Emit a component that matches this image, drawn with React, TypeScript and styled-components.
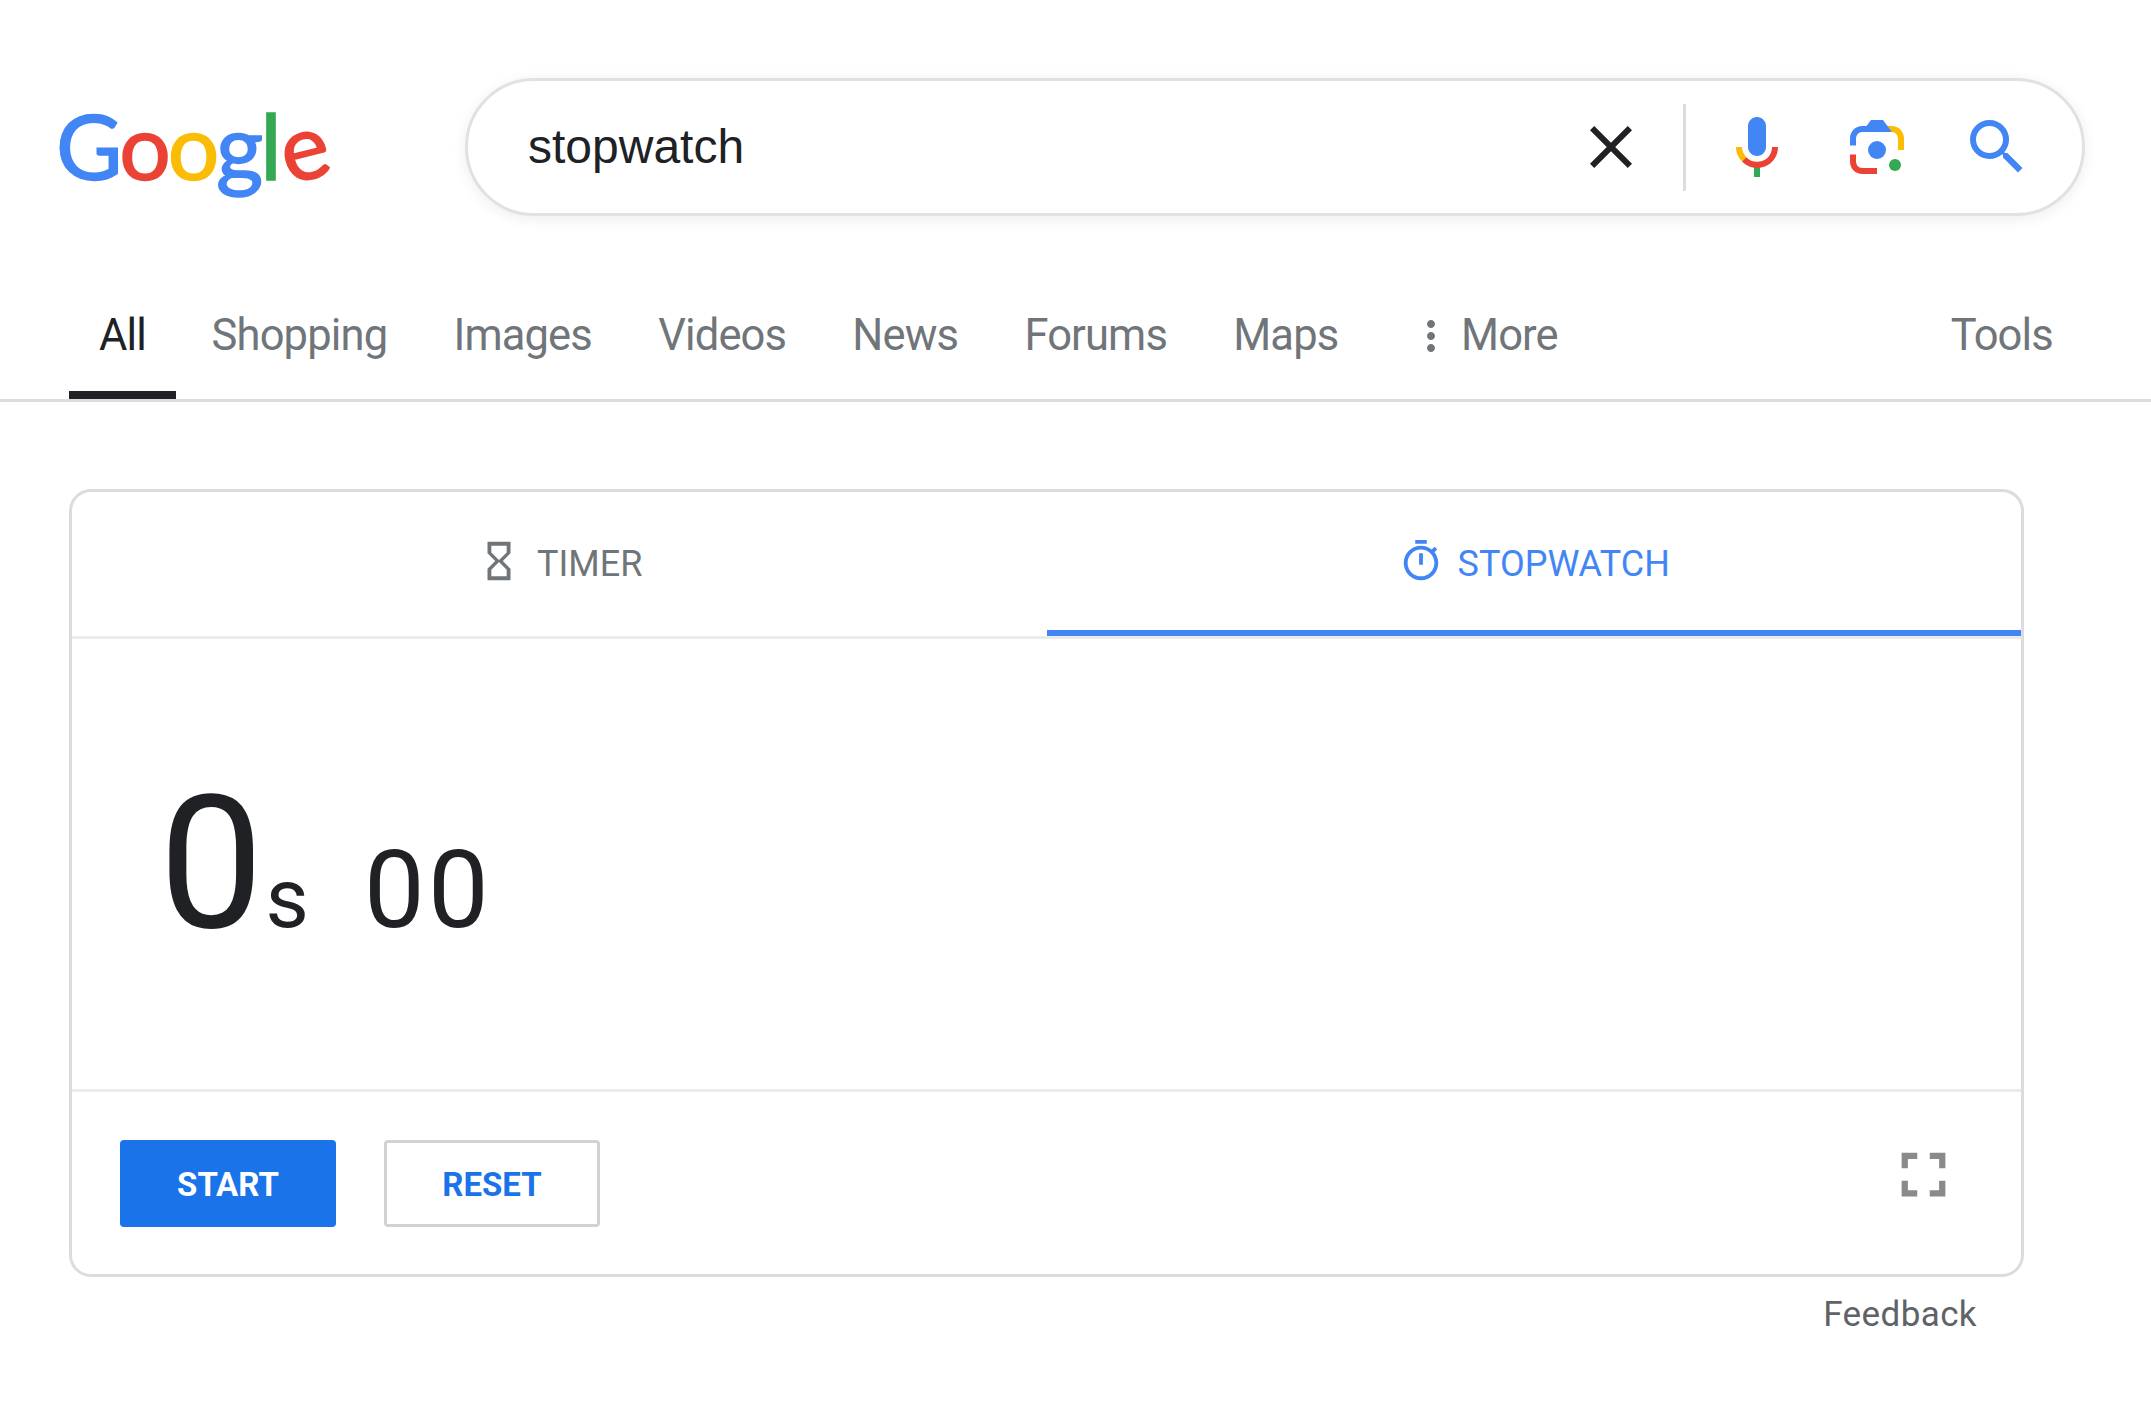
import React from 'react';
import styled, { createGlobalStyle } from 'styled-components';

const GlobalStyle = createGlobalStyle`
  html, body {
    margin: 0;
    padding: 0;
    background: #fff;
  }
  body {
    font-family: Roboto, "Liberation Sans", sans-serif;
    color: #202124;
  }
  * {
    box-sizing: border-box;
  }
`;

const Page = styled.div`
  width: 2151px;
  height: 1401px;
  overflow: hidden;
  background: #fff;
`;

const Header = styled.header`
  display: flex;
  align-items: flex-start;
  padding: 78px 66px 0 56px;
  height: 286px;
`;

const Logo = styled.div`
  width: 409px;
  flex-shrink: 0;
  margin-top: 7px;
  display: flex;
  font-family: Lato, Roboto, sans-serif;
  font-size: 91px;
  line-height: 120px;
  letter-spacing: -3.2px;
  font-weight: 400;
  -webkit-text-stroke: 1.5px currentColor;
`;

const LogoLetter = styled.span<{ $color: string; $tilt?: boolean }>`
  color: ${p => p.$color};
  display: inline-block;
  transform: ${p => (p.$tilt ? 'rotate(-14deg)' : 'none')};
`;

const SearchBox = styled.div`
  flex: 1;
  height: 138px;
  display: flex;
  align-items: center;
  padding: 0 25px 0 60px;
  background: #fff;
  border: 3px solid #dfe1e5;
  border-radius: 69px;
  box-shadow: 0 3px 14px rgba(32, 33, 36, 0.08);
`;

const SearchText = styled.div`
  flex: 1;
  margin-top: -2px;
  font-family: "Liberation Sans", Arial, sans-serif;
  font-size: 48px;
  color: #202124;
`;

const IconSlot = styled.div<{ $width: number }>`
  width: ${p => p.$width}px;
  height: 72px;
  display: flex;
  align-items: center;
  justify-content: center;
  flex-shrink: 0;
`;

const SearchDivider = styled.div`
  width: 3px;
  height: 87px;
  margin: 0 11.5px 0 35.5px;
  background: #dadce0;
`;

const Nav = styled.nav`
  height: 116px;
  display: flex;
  padding: 0 65px 0 69px;
  border-bottom: 3px solid #dadce0;
`;

const NavItem = styled.a<{ $active?: boolean; $offset?: number }>`
  display: flex;
  align-items: flex-start;
  gap: 6px;
  padding: 20px ${p => (p.$active ? '30px' : '33.1px')} 0;
  margin-left: ${p => p.$offset ?? 0}px;
  margin-right: ${p => (p.$active ? '2.5px' : '0')};
  height: 113px;
  font-size: 43.5px;
  letter-spacing: -0.85px;
  line-height: 60px;
  color: ${p => (p.$active ? '#202124' : '#70757a')};
  border-bottom: ${p => (p.$active ? '8px solid #202124' : 'none')};
`;

const NavSpacer = styled.div`
  flex: 1;
`;

const MoreIcon = styled.svg`
  width: 48px;
  height: 48px;
  margin: 6px 0 0 -12px;
  fill: #70757a;
`;

const Main = styled.main`
  padding: 87px 0 0 69px;
`;

const Card = styled.section`
  width: 1955px;
  height: 788px;
  border: 3px solid #dadce0;
  border-radius: 22px;
  display: flex;
  flex-direction: column;
`;

const TabRow = styled.div`
  height: 147px;
  display: grid;
  grid-template-columns: 1fr 1fr;
  border-bottom: 3px solid #ebebeb;
`;

const Tab = styled.div<{ $active?: boolean }>`
  display: flex;
  align-items: center;
  justify-content: center;
  gap: ${p => (p.$active ? '14px' : '15px')};
  height: 144px;
  font-size: 36px;
  color: ${p => (p.$active ? '#4285f4' : '#70757a')};
  border-bottom: 6px solid ${p => (p.$active ? '#4285f4' : 'transparent')};
  svg {
    fill: currentColor;
    flex-shrink: 0;
  }
`;

const TabLabel = styled.span`
  padding-top: 5px;
`;

const Display = styled.div`
  height: 453px;
  display: flex;
  align-items: baseline;
  padding: 124px 0 0 87px;
  color: #202124;
  border-bottom: 3px solid #ebebeb;
`;

const Seconds = styled.span`
  font-size: 186px;
  line-height: 200px;
`;

const Unit = styled.span`
  font-size: 84px;
  margin-left: 2px;
`;

const Fraction = styled.span`
  font-size: 108px;
  letter-spacing: 3.5px;
  margin-left: 55px;
`;

const Controls = styled.div`
  flex: 1;
  display: flex;
  align-items: flex-start;
  gap: 48px;
  padding: 48px 60px 0 48px;
`;

const Button = styled.button<{ $primary?: boolean }>`
  width: 216px;
  height: 87px;
  border-radius: 4px;
  border: ${p => (p.$primary ? 'none' : '3px solid #d2d2d2')};
  background: ${p => (p.$primary ? '#1a73e8' : '#fff')};
  color: ${p => (p.$primary ? '#fff' : '#1a73e8')};
  font-family: Roboto, sans-serif;
  font-size: 33px;
  font-weight: 700;
  padding: 2px 0 0;
`;

const ExpandIcon = styled.svg`
  width: 75px;
  height: 75px;
  margin: -3px 0 0 auto;
  fill: #8a8a8a;
`;

const FeedbackRow = styled.div`
  width: 1955px;
  display: flex;
  justify-content: flex-end;
  padding: 15px 47px 0 0;
`;

const Feedback = styled.a`
  font-size: 35px;
  line-height: 46px;
  letter-spacing: 0.4px;
  color: #5f6368;
`;

const CloseIcon = () => (
  <svg width="72" height="72" viewBox="0 0 24 24" fill="#202124">
    <path d="M19 6.41 17.59 5 12 10.59 6.41 5 5 6.41 10.59 12 5 17.59 6.41 19 12 13.41 17.59 19 19 17.59 13.41 12z" />
  </svg>
);

const MicIcon = () => (
  <svg width="72" height="72" viewBox="0 0 24 24">
    <path fill="#4285f4" d="m12 15c1.66 0 3-1.31 3-2.97v-7.02c0-1.66-1.34-3.01-3-3.01s-3 1.34-3 3.01v7.02c0 1.66 1.34 2.97 3 2.97z" />
    <path fill="#34a853" d="m11 18.08h2v3.92h-2z" />
    <path fill="#fbbc04" d="m7.05 16.87c-1.27-1.33-2.05-2.83-2.05-4.87h2c0 1.45 0.56 2.42 1.47 3.38v0.32l-1.15 1.18z" />
    <path fill="#ea4335" d="m12 16.93a4.97 5.25 0 0 1 -3.54 -1.55l-1.41 1.49c1.26 1.34 3.02 2.13 4.95 2.13 3.87 0 6.99-2.92 6.99-7h-1.99c0 2.92-2.24 4.93-5 4.93z" />
  </svg>
);

const LensIcon = () => (
  <svg width="72" height="72" viewBox="0 0 192 192">
    <circle fill="#34a853" cx="144.07" cy="144" r="16" />
    <circle fill="#4285f4" cx="96.07" cy="104" r="24" />
    <path fill="#ea4335" d="M24,135.2c0,18.11,14.69,32.8,32.8,32.8H96v-16l-40.1-0.1c-8.8,0-15.9-8.19-15.9-17.9v-18H24V135.2z" />
    <path fill="#fbbc04" d="M168,72.8c0-18.11-14.69-32.8-32.8-32.8H116l20,16c8.8,0,16,8.29,16,18v30h16V72.8z" />
    <path fill="#4285f4" d="M112,24l-32,0L68,40H56.8C38.69,40,24,54.69,24,72.8V92h16V74c0-9.71,7.2-18,16-18h80L112,24z" />
  </svg>
);

const SearchIcon = () => (
  <svg width="72" height="72" viewBox="0 0 24 24" fill="#4285f4">
    <path d="M15.5 14h-.79l-.28-.27A6.471 6.471 0 0 0 16 9.5 6.5 6.5 0 1 0 9.5 16c1.61 0 3.09-.59 4.23-1.57l.27.28v.79l5 4.99L20.49 19l-4.99-5zm-6 0C7.01 14 5 11.99 5 9.5S7.01 5 9.5 5 14 7.01 14 9.5 11.99 14 9.5 14z" />
  </svg>
);

const navItems = ['Shopping', 'Images', 'Videos', 'News', 'Forums', 'Maps'];

const App: React.FC = () => {
  return (
    <Page>
      <GlobalStyle />
      <Header>
        <Logo>
          <LogoLetter $color="#4285f4">G</LogoLetter>
          <LogoLetter $color="#ea4335">o</LogoLetter>
          <LogoLetter $color="#fbbc05">o</LogoLetter>
          <LogoLetter $color="#4285f4">g</LogoLetter>
          <LogoLetter $color="#34a853">l</LogoLetter>
          <LogoLetter $color="#ea4335" $tilt>e</LogoLetter>
        </Logo>
        <SearchBox>
          <SearchText>stopwatch</SearchText>
          <IconSlot $width={72}><CloseIcon /></IconSlot>
          <SearchDivider />
          <IconSlot $width={120}><MicIcon /></IconSlot>
          <IconSlot $width={120}><LensIcon /></IconSlot>
          <IconSlot $width={120}><SearchIcon /></IconSlot>
        </SearchBox>
      </Header>

      <Nav>
        <NavItem $active>All</NavItem>
        {navItems.map(item => (
          <NavItem key={item}>{item}</NavItem>
        ))}
        <NavItem $offset={14.5}>
          <MoreIcon viewBox="0 0 24 24">
            <path d="M12 8c1.1 0 2-.9 2-2s-.9-2-2-2-2 .9-2 2 .9 2 2 2zm0 2c-1.1 0-2 .9-2 2s.9 2 2 2 2-.9 2-2-.9-2-2-2zm0 6c-1.1 0-2 .9-2 2s.9 2 2 2 2-.9 2-2-.9-2-2-2z" />
          </MoreIcon>
          More
        </NavItem>
        <NavSpacer />
        <NavItem>Tools</NavItem>
      </Nav>

      <Main>
        <Card>
          <TabRow>
            <Tab>
              <svg width="46" height="46" viewBox="0 0 24 24">
                <path d="M6 2v6h.01L6 8.01 10 12l-4 4 .01.01H6V22h12v-5.99h-.01L18 16l-4-4 4-3.99-.01-.01H18V2H6zm10 14.5V20H8v-3.5l4-4 4 4zm-4-5l-4-4V4h8v3.5l-4 4z" />
              </svg>
              <TabLabel>TIMER</TabLabel>
            </Tab>
            <Tab $active>
              <svg width="46" height="46" viewBox="0 0 24 24">
                <path d="M15 1H9v2h6V1zm-4 13h2V8h-2v6zm8.03-6.61l1.42-1.42c-.43-.51-.9-.99-1.41-1.41l-1.42 1.42C16.07 4.74 14.12 4 12 4c-4.97 0-9 4.03-9 9s4.02 9 9 9 9-4.03 9-9c0-2.12-.74-4.07-1.97-5.61zM12 20c-3.87 0-7-3.13-7-7s3.13-7 7-7 7 3.13 7 7-3.13 7-7 7z" />
              </svg>
              <TabLabel>STOPWATCH</TabLabel>
            </Tab>
          </TabRow>
          <Display>
            <Seconds>0</Seconds>
            <Unit>s</Unit>
            <Fraction>00</Fraction>
          </Display>
          <Controls>
            <Button $primary>START</Button>
            <Button>RESET</Button>
            <ExpandIcon viewBox="0 0 24 24">
              <path d="M7 14H5v5h5v-2H7v-3zm-2-4h2V7h3V5H5v5zm12 7h-3v2h5v-5h-2v3zM14 5v2h3v3h2V5h-5z" />
            </ExpandIcon>
          </Controls>
        </Card>
        <FeedbackRow>
          <Feedback>Feedback</Feedback>
        </FeedbackRow>
      </Main>
    </Page>
  );
};

export default App;
